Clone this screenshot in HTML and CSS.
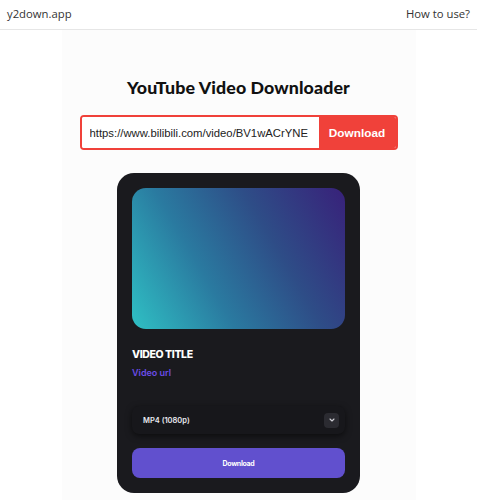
FILE: index.html
```html
<!DOCTYPE html>
<html>
<head>
<meta charset="utf-8">
<link rel="stylesheet" href="styles.css">
</head>
<body>
<header class="topbar">
  <span class="brand">y2down.app</span>
  <span class="howto">How to use?</span>
</header>
<main class="panel">
  <h1 class="title">YouTube Video Downloader</h1>
  <form class="search">
    <input class="url" type="text" value="https://www.bilibili.com/video/BV1wACrYNE">
    <button class="go" type="button">Download</button>
  </form>
  <section class="card">
    <div class="thumb"></div>
    <div class="vtitle">VIDEO TITLE</div>
    <div class="vurl">Video url</div>
    <div class="select">
      <span class="opt">MP4 (1080p)</span>
      <span class="chev"><svg width="8" height="8" viewBox="0 0 8 8"><path d="M2 3 L4 5 L6 3" fill="none" stroke="#cfcfd6" stroke-width="1.1" stroke-linecap="round" stroke-linejoin="round"/></svg></span>
    </div>
    <button class="dl" type="button">Download</button>
  </section>
</main>
</body>
</html>
```
FILE: styles.css
```css
* { box-sizing: border-box; }
html, body { margin: 0; padding: 0; background: #ffffff; }
body { font-family: "Open Sans", "Noto Sans", sans-serif; overflow: hidden; height: 500px; }
.topbar {
  height: 30px;
  display: flex;
  justify-content: space-between;
  align-items: center;
  padding: 0 7px 2px 7px;
  border-bottom: 1px solid #e6e6e6;
  font-size: 11.3px;
  font-weight: 500;
  color: #333333;
}
.panel {
  width: 354px;
  margin: 0 auto;
  background: #fcfcfc;
  min-height: 470px;
  display: flex;
  flex-direction: column;
  align-items: center;
  padding-top: 46px;
}
.title {
  margin: 0;
  font-family: "Lato", "Open Sans", sans-serif;
  font-weight: 900;
  font-size: 17.8px;
  letter-spacing: 0.1px;
  color: #111;
  line-height: 23px;
}
.search {
  margin: 16px 0 0 0;
  display: flex;
  width: 318px;
  height: 35px;
  border: 2px solid #f0413a;
  border-radius: 4px;
  overflow: hidden;
  background: #fff;
}
.url {
  flex: 1;
  min-width: 0;
  border: 0;
  outline: none;
  padding: 0 6px 0 8px;
  font-family: "Liberation Sans", Arial, sans-serif;
  font-size: 11.3px;
  color: #222;
  background: #fff;
}
.go {
  width: 77px;
  border: 0;
  background: #f0413a;
  color: #fff;
  font-family: "Liberation Sans", Arial, sans-serif;
  font-weight: 700;
  font-size: 11.8px;
  padding: 0;
}
.card {
  margin-top: 23px;
  width: 243px;
  background: #1a1a1e;
  border-radius: 17px;
  padding: 15px 15px 15px 15px;
  font-family: "Inter", "Open Sans", sans-serif;
  display: flex;
  flex-direction: column;
}
.thumb {
  height: 141px;
  border-radius: 14px;
  background: linear-gradient(60deg, #2fc0c4 0%, #2a7aa0 35%, #2e4d87 65%, #38217a 100%);
}
.vtitle {
  margin-top: 19px;
  color: #fff;
  font-weight: 800;
  font-size: 10.5px;
  letter-spacing: -0.4px;
  line-height: 14px;
}
.vurl {
  margin-top: 5px;
  color: #6a4ce6;
  font-weight: 600;
  font-size: 9px;
  line-height: 12px;
}
.select {
  margin-top: 27px;
  height: 28px;
  border-radius: 7px;
  background: #17171b;
  box-shadow: 0 2px 6px rgba(0,0,0,0.55);
  display: flex;
  align-items: center;
  justify-content: space-between;
  padding: 0 6px 0 11px;
}
.opt {
  color: #e8e8ee;
  font-size: 7.5px;
  font-weight: 600;
}
.chev {
  width: 15px;
  height: 15px;
  border-radius: 4px;
  background: #2b2b31;
  display: flex;
  align-items: center;
  justify-content: center;
}
.dl {
  margin-top: 14px;
  height: 30px;
  border: 0;
  border-radius: 8px;
  background: #6150ce;
  color: #fff;
  font-family: "Inter", "Open Sans", sans-serif;
  font-weight: 700;
  font-size: 7px;
  letter-spacing: -0.3px;
  padding: 0;
}
```
